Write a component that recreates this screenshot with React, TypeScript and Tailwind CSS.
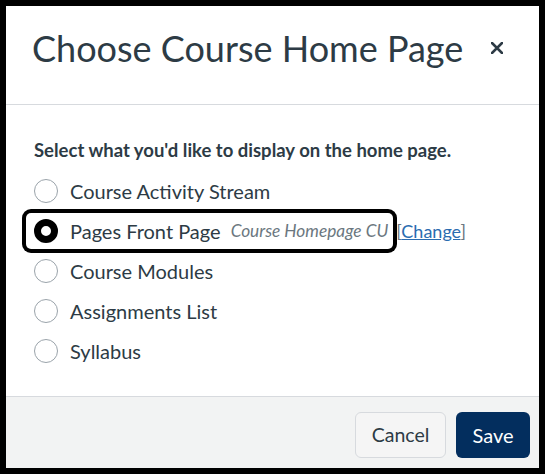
import { useState } from 'react';

const options = [
  { id: 'feed', label: 'Course Activity Stream' },
  { id: 'wiki', label: 'Pages Front Page' },
  { id: 'modules', label: 'Course Modules' },
  { id: 'assignments', label: 'Assignments List' },
  { id: 'syllabus', label: 'Syllabus' },
];

function Radio({ checked }: { checked: boolean }) {
  return (
    <span
      className={
        checked
          ? 'block w-6 h-6 shrink-0 rounded-full border-[7px] border-black bg-white'
          : 'block w-6 h-6 shrink-0 rounded-full border border-[#9aa3aa] bg-white'
      }
    />
  );
}

export default function App() {
  const [selected, setSelected] = useState('wiki');

  return (
    <div
      className="w-[545px] h-[474px] bg-black p-[6px]"
      style={{ fontFamily: 'Lato, "Noto Sans", sans-serif' }}
    >
      <div className="flex h-full flex-col bg-white text-[#2d3b45]">
        <div className="flex h-[99px] items-start justify-between border-b border-[#d7dade] pl-[26px] pr-[36px] pt-[21px]">
          <h1 className="text-[36px] leading-[43px] font-normal">Choose Course Home Page</h1>
          <button className="mt-[15px] flex h-[12px] w-[12px] items-center justify-center" aria-label="Close">
            <svg width="12" height="12" viewBox="0 0 12 12">
              <path d="M1 1 L11 11 M11 1 L1 11" stroke="#2d3b45" strokeWidth="2.5" strokeLinecap="round" />
            </svg>
          </button>
        </div>

        <div className="flex-1 pl-[28px] pt-[32px]">
          <p className="text-[18.5px] leading-[26px] font-bold">Select what you'd like to display on the home page.</p>
          <div className="mt-[8px] flex flex-col">
            {options.map((o) => (
              <div key={o.id} className="flex h-[40px] items-center">
                {o.id === 'wiki' ? (
                  <>
                    <label
                      className="ml-[-8px] flex h-[36px] cursor-pointer items-center gap-[12px] rounded-[5px] pl-[8px] pr-[5px] ring-4 ring-black"
                      onClick={() => setSelected(o.id)}
                    >
                      <Radio checked={selected === o.id} />
                      <span className="text-[20px]">{o.label}</span>
                      <span className="ml-[-2px] text-[17.3px] italic text-[#6b7780]">Course Homepage CU</span>
                    </label>
                    <span className="ml-[3px] text-[18px] text-[#6b7780]">
                      [<a href="#" className="text-[#2b6cb0] underline">Change</a>]
                    </span>
                  </>
                ) : (
                  <label className="flex cursor-pointer items-center gap-[12px]" onClick={() => setSelected(o.id)}>
                    <Radio checked={selected === o.id} />
                    <span className="text-[20px]">{o.label}</span>
                  </label>
                )}
              </div>
            ))}
          </div>
        </div>

        <div className="flex h-[72px] items-start justify-end gap-[10px] border-t border-[#d7dade] bg-[#f2f3f3] pr-[9px] pt-[15px]">
          <button className="h-[46px] w-[91px] rounded-[6px] border border-[#d7dade] bg-[#f5f5f5] text-[19.5px] text-[#2d3b45]">
            Cancel
          </button>
          <button className="h-[46px] w-[74px] rounded-[6px] bg-[#032e5e] text-[20px] text-white">Save</button>
        </div>
      </div>
    </div>
  );
}
